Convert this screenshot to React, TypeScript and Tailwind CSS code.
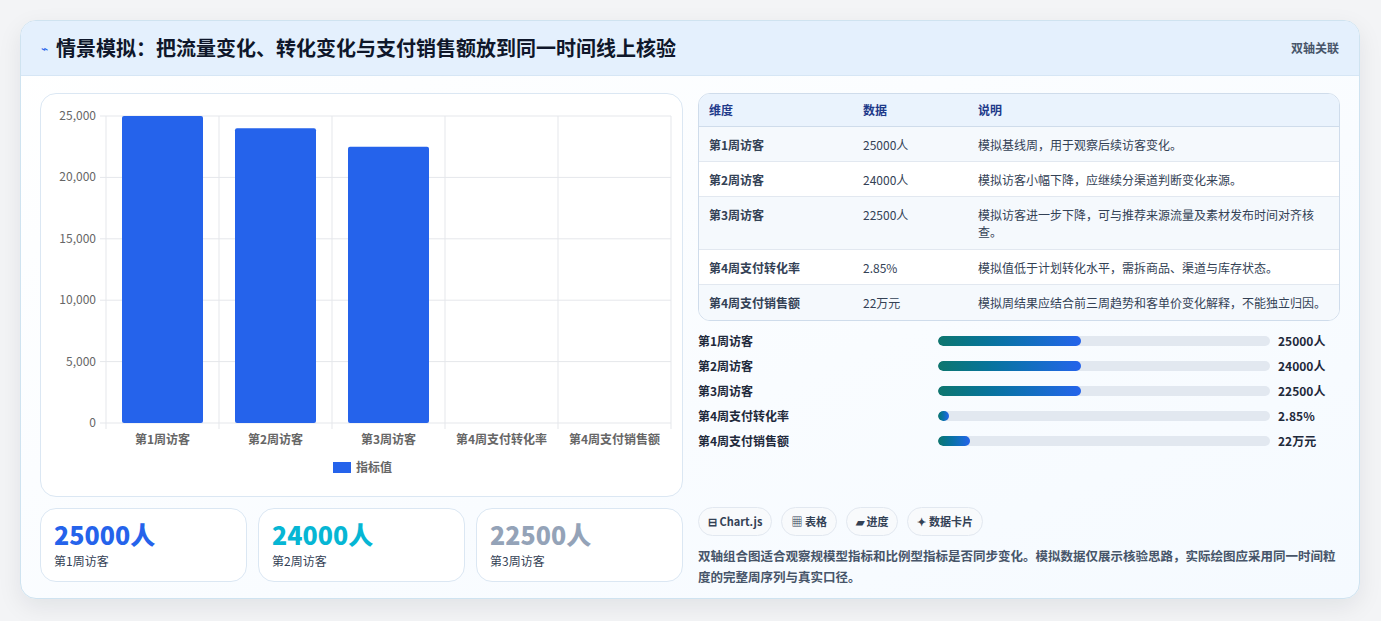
const font = { fontFamily: '"Noto Sans CJK SC", "Noto Sans", sans-serif' };

const rows = [
  ["第1周访客", "25000人", "模拟基线周，用于观察后续访客变化。"],
  ["第2周访客", "24000人", "模拟访客小幅下降，应继续分渠道判断变化来源。"],
  ["第3周访客", "22500人", "模拟访客进一步下降，可与推荐来源流量及素材发布时间对齐核查。"],
  ["第4周支付转化率", "2.85%", "模拟值低于计划转化水平，需拆商品、渠道与库存状态。"],
  ["第4周支付销售额", "22万元", "模拟周结果应结合前三周趋势和客单价变化解释，不能独立归因。"],
];

const bars = [
  ["第1周访客", 43, "25000人"],
  ["第2周访客", 43, "24000人"],
  ["第3周访客", 43, "22500人"],
  ["第4周支付转化率", 3.3, "2.85%"],
  ["第4周支付销售额", 9.6, "22万元"],
] as const;

function Chart() {
  const L = 65, T = 22, B = 329, W = 113;
  const y = (v: number) => B - (v / 25000) * (B - T);
  const cats = ["第1周访客", "第2周访客", "第3周访客", "第4周支付转化率", "第4周支付销售额"];
  const vals = [25000, 24000, 22500, 0, 0];
  return (
    <svg width="643" height="403" className="block">
      {[0, 5000, 10000, 15000, 20000, 25000].map((v) => (
        <g key={v}>
          <line x1={L - 6} x2={630} y1={y(v)} y2={y(v)} stroke="#e5e7eb" />
          <text x={L - 10} y={y(v) + 4} textAnchor="end" fontSize="12" fill="#666">{v === 0 ? "0" : v.toLocaleString("en-US")}</text>
        </g>
      ))}
      {[0, 1, 2, 3, 4, 5].map((i) => (
        <line key={i} x1={L + W * i} x2={L + W * i} y1={T} y2={B + 6} stroke="#e5e7eb" />
      ))}
      {vals.map((v, i) =>
        v > 0 ? <rect key={i} x={L + W * i + 16} y={y(v)} width={81} height={B - y(v)} fill="#2563eb" rx="2" /> : null
      )}
      {cats.map((c, i) => (
        <text key={c} x={L + W * i + W / 2} y={350} textAnchor="middle" fontSize="12" fontWeight="600" fill="#666">{c}</text>
      ))}
      <rect x={292} y={368} width={18} height={11} fill="#2563eb" />
      <text x={315} y={378} fontSize="12" fontWeight="600" fill="#666">指标值</text>
    </svg>
  );
}

export default function App() {
  return (
    <div style={font} className="w-[1381px] h-[621px] bg-[#f3f4f6] pt-5 px-5">
      <div className="w-[1340px] h-[579px] rounded-2xl border border-[#cfe3f0] bg-gradient-to-br from-white to-[#f5faff] shadow-[0_8px_24px_rgba(15,23,42,0.08)] overflow-hidden">
        <div className="h-[55px] bg-[#e4f0fd] border-b border-[#d6e6f5] flex items-center justify-between px-5">
          <div className="flex items-center gap-2">
            <span className="text-[#2563eb] text-xs">⌁</span>
            <span className="text-[20px] font-bold text-[#0f172a]">情景模拟：把流量变化、转化变化与支付销售额放到同一时间线上核验</span>
          </div>
          <span className="text-xs font-semibold text-[#475569]">双轴关联</span>
        </div>
        <div className="flex gap-[15px] px-[19px] pt-[17px]">
          <div className="w-[643px] flex flex-col gap-[11px]">
            <div className="h-[404px] rounded-2xl border border-[#dbe7f3] bg-white overflow-hidden">
              <Chart />
            </div>
            <div className="flex gap-[11px]">
              {[
                ["25000人", "text-[#2563eb]"],
                ["24000人", "text-[#06b6d4]"],
                ["22500人", "text-[#94a3b8]"],
              ].map(([n, c], i) => (
                <div key={i} className="w-[207px] h-[74px] rounded-2xl border border-[#dbe7f3] bg-white px-[13px] pt-[10px]">
                  <div className={`text-[25px] font-extrabold leading-[30px] ${c}`}>{n}</div>
                  <div className="text-xs text-[#334155] mt-1">{["第1周访客", "第2周访客", "第3周访客"][i]}</div>
                </div>
              ))}
            </div>
          </div>
          <div className="w-[643px]">
            <div className="rounded-xl border border-[#cfdceb] overflow-hidden bg-white">
              <div className="flex h-[33px] items-center bg-[#eaf3fd] text-xs font-bold text-[#1e3a8a] border-b border-[#cfdceb]">
                <div className="w-[154px] pl-[10px]">维度</div>
                <div className="w-[115px] pl-[10px]">数据</div>
                <div className="flex-1 pl-[10px]">说明</div>
              </div>
              {rows.map((r, i) => (
                <div key={i} className={`flex text-xs text-[#334155] leading-[17px] pt-[9px] ${i === 2 ? "h-[53px]" : "h-[35px]"} ${i % 2 === 0 ? "bg-[#f5f9fd]" : "bg-white"} ${i < 4 ? "border-b border-[#e2e8f0]" : ""}`}>
                  <div className="w-[154px] pl-[10px] font-semibold">{r[0]}</div>
                  <div className="w-[115px] pl-[10px]">{r[1]}</div>
                  <div className="flex-1 pl-[10px] pr-2">{r[2]}</div>
                </div>
              ))}
            </div>
            <div className="mt-[11px] flex flex-col gap-[7px]">
              {bars.map(([l, p, v]) => (
                <div key={l} className="flex items-center h-[18px] text-xs font-semibold text-[#1e293b]">
                  <div className="w-[240px]">{l}</div>
                  <div className="w-[332px] h-[10px] rounded-full bg-[#e2e8f0] overflow-hidden">
                    <div className="h-full rounded-full bg-gradient-to-r from-[#0f766e] to-[#2563eb]" style={{ width: `${p}%` }} />
                  </div>
                  <div className="ml-2">{v}</div>
                </div>
              ))}
            </div>
            <div className="mt-[57px] flex gap-[9px]">
              {["⊟ Chart.js", "▦ 表格", "▰ 进度", "✦ 数据卡片"].map((t) => (
                <span key={t} className="h-[29px] px-[9px] flex items-center rounded-full border border-[#e2e8f0] bg-[#f8fafc] text-[11px] font-semibold text-[#334155]">{t}</span>
              ))}
            </div>
            <p className="mt-[9px] text-[12.5px] leading-[21px] text-[#475569] font-semibold">双轴组合图适合观察规模型指标和比例型指标是否同步变化。模拟数据仅展示核验思路，实际绘图应采用同一时间粒度的完整周序列与真实口径。</p>
          </div>
        </div>
      </div>
    </div>
  );
}
